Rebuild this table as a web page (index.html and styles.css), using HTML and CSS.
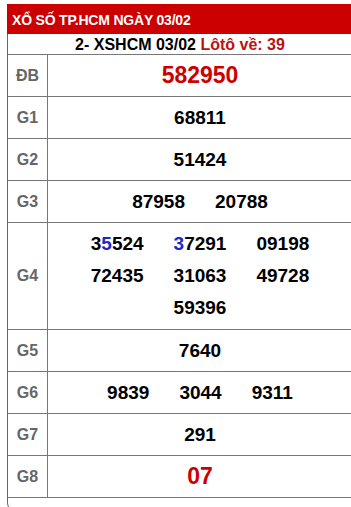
FILE: index.html
```html
<!DOCTYPE html>
<html lang="vi">
<head>
<meta charset="utf-8">
<title>XỔ SỐ TP.HCM NGÀY 03/02</title>
<link rel="stylesheet" href="styles.css">
</head>
<body>
<div class="wrap">
  <div class="head">XỔ SỐ TP.HCM NGÀY 03/02</div>
  <div class="box">
    <div class="sub">2- XSHCM 03/02 <span class="loto">Lôtô về: 39</span></div>
    <div class="row"><div class="lbl">ĐB</div><div class="val"><span class="big">582950</span></div></div>
    <div class="row"><div class="lbl">G1</div><div class="val"><span>68811</span></div></div>
    <div class="row"><div class="lbl">G2</div><div class="val"><span>51424</span></div></div>
    <div class="row"><div class="lbl">G3</div><div class="val"><span>87958</span><span>20788</span></div></div>
    <div class="row tall"><div class="lbl">G4</div><div class="val"><div class="g4"><span>3<b class="blue">5</b>524</span><span><b class="blue">3</b>7291</span><span>09198</span><span>72435</span><span>31063</span><span>49728</span><span>59396</span></div></div></div>
    <div class="row"><div class="lbl">G5</div><div class="val"><span>7640</span></div></div>
    <div class="row"><div class="lbl">G6</div><div class="val"><span>9839</span><span>3044</span><span>9311</span></div></div>
    <div class="row"><div class="lbl">G7</div><div class="val"><span>291</span></div></div>
    <div class="row"><div class="lbl">G8</div><div class="val"><span class="big">07</span></div></div>
  </div>
</div>
</body>
</html>
```
FILE: styles.css
```css
html, body {
  margin: 0;
  padding: 0;
  background: #fff;
  overflow: hidden;
}
body {
  font-family: "Liberation Sans", Arial, sans-serif;
  color: #000;
}
.wrap {
  padding: 4px 0 0 7px;
}
.head {
  width: 345px;
  height: 30px;
  box-sizing: border-box;
  background: #cc0000;
  color: #fff;
  font-weight: bold;
  font-size: 14px;
  letter-spacing: -0.2px;
  padding: 5px 0 0 5px;
  line-height: 22px;
}
.box {
  width: 345px;
  box-sizing: border-box;
  border-left: 1px solid #666;
  border-bottom: 1px solid #666;
  border-bottom-left-radius: 8px;
  padding-bottom: 12px;
}
.sub {
  height: 20px;
  line-height: 22px;
  text-align: center;
  font-weight: bold;
  font-size: 16px;
  border-bottom: 1px solid #777;
}
.loto {
  color: #bb1111;
}
.row {
  display: grid;
  grid-template-columns: 40px 1fr;
  height: 42px;
  box-sizing: border-box;
  border-bottom: 1px solid #777;
}
.row.tall {
  height: 107px;
}
.lbl {
  border-right: 1px solid #777;
  display: flex;
  align-items: center;
  justify-content: center;
  font-weight: bold;
  font-size: 16px;
  color: #666;
}
.val {
  display: flex;
  align-items: center;
  justify-content: center;
  gap: 30px;
  font-weight: bold;
  font-size: 19px;
}
.big {
  color: #cc0000;
  font-size: 23px;
}
.g4 {
  width: 220px;
  display: flex;
  flex-wrap: wrap;
  justify-content: center;
  column-gap: 30px;
  line-height: 32px;
}
.blue {
  color: #2626c8;
  font-weight: bold;
}
```
